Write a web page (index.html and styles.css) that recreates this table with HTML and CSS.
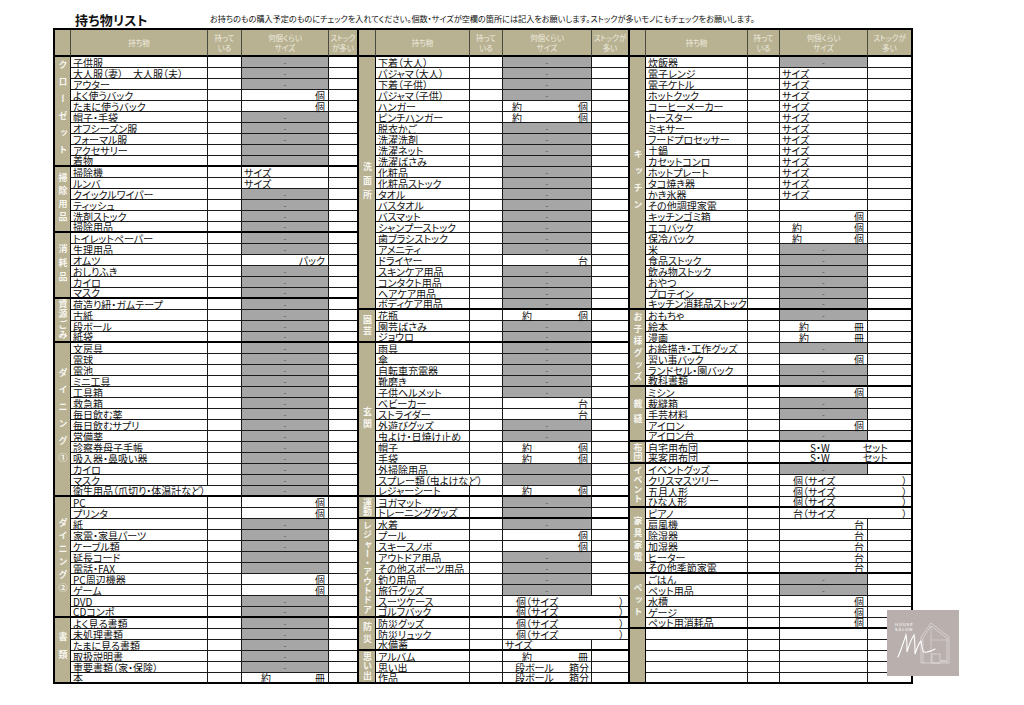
FILE: index.html
```html
<!DOCTYPE html>
<html lang="ja">
<head>
<meta charset="utf-8">
<title>持ち物リスト</title>
<link rel="stylesheet" href="styles.css">
</head>
<body>
<div class="page">
  <header class="head">
    <h1 class="title">持ち物リスト</h1>
    <p class="note">お持ちのもの購入予定のものにチェックを入れてください。個数・サイズが空欄の箇所には記入をお願いします。ストックが多いモノにもチェックをお願いします。</p>
  </header>
  <div class="sheet">
    <table class="t1">
      <colgroup><col class="c-lb1"><col class="c-it1"><col class="c-hv1"><col class="c-sz1"><col class="c-st1"></colgroup>
      <thead><tr><th></th><th>持ち物</th><th>持って<br>いる</th><th>何個くらい<br>サイズ</th><th>ストック<br>が多い</th></tr></thead>
      <tbody>
        <tr><td class="lb" rowspan="10"><span class="v s8">クローゼット</span></td><td class="it">子供服</td><td></td><td class="g">-</td><td></td></tr>
        <tr><td class="it">大人服（妻）　大人服（夫）</td><td></td><td class="g">-</td><td></td></tr>
        <tr><td class="it">アウター</td><td></td><td class="g">-</td><td></td></tr>
        <tr><td class="it">よく使うバック</td><td></td><td class="r">個</td><td></td></tr>
        <tr><td class="it">たまに使うバック</td><td></td><td class="r">個</td><td></td></tr>
        <tr><td class="it">帽子・手袋</td><td></td><td class="g">-</td><td></td></tr>
        <tr><td class="it">オフシーズン服</td><td></td><td class="g">-</td><td></td></tr>
        <tr><td class="it">フォーマル服</td><td></td><td class="g">-</td><td></td></tr>
        <tr><td class="it">アクセサリー</td><td></td><td class="g"></td><td></td></tr>
        <tr><td class="it">着物</td><td></td><td class="g"></td><td></td></tr>
      </tbody>
      <tbody>
        <tr><td class="lb" rowspan="6"><span class="v s4">掃除用品</span></td><td class="it">掃除機</td><td></td><td class="sz">サイズ</td><td></td></tr>
        <tr><td class="it">ルンバ</td><td></td><td class="sz">サイズ</td><td></td></tr>
        <tr><td class="it">クイックルワイパー</td><td></td><td class="g">-</td><td></td></tr>
        <tr><td class="it">ティッシュ</td><td></td><td class="g">-</td><td></td></tr>
        <tr><td class="it">洗剤ストック</td><td></td><td class="g">-</td><td></td></tr>
        <tr><td class="it">掃除用品</td><td></td><td class="g">-</td><td></td></tr>
      </tbody>
      <tbody>
        <tr><td class="lb" rowspan="6"><span class="v s5">消耗品</span></td><td class="it">トイレットペーパー</td><td></td><td class="g">-</td><td></td></tr>
        <tr><td class="it">生理用品</td><td></td><td class="g">-</td><td></td></tr>
        <tr><td class="it">オムツ</td><td></td><td class="r">パック</td><td></td></tr>
        <tr><td class="it">おしりふき</td><td></td><td class="g">-</td><td></td></tr>
        <tr><td class="it">カイロ</td><td></td><td class="g">-</td><td></td></tr>
        <tr><td class="it">マスク</td><td></td><td class="g">-</td><td></td></tr>
      </tbody>
      <tbody>
        <tr><td class="lb" rowspan="4"><span class="v s15">資源ごみ</span></td><td class="it">荷造り紐・ガムテープ</td><td></td><td class="g">-</td><td></td></tr>
        <tr><td class="it">古紙</td><td></td><td class="g">-</td><td></td></tr>
        <tr><td class="it">段ボール</td><td></td><td class="g">-</td><td></td></tr>
        <tr><td class="it">紙袋</td><td></td><td class="g">-</td><td></td></tr>
      </tbody>
      <tbody>
        <tr><td class="lb" rowspan="14"><span class="v s8">ダイニング①</span></td><td class="it">文房具</td><td></td><td class="g">-</td><td></td></tr>
        <tr><td class="it">電球</td><td></td><td class="g">-</td><td></td></tr>
        <tr><td class="it">電池</td><td></td><td class="g">-</td><td></td></tr>
        <tr><td class="it">ミニ工具</td><td></td><td class="g">-</td><td></td></tr>
        <tr><td class="it">工具箱</td><td></td><td class="g">-</td><td></td></tr>
        <tr><td class="it">救急箱</td><td></td><td class="g">-</td><td></td></tr>
        <tr><td class="it">毎日飲む薬</td><td></td><td class="g">-</td><td></td></tr>
        <tr><td class="it">毎日飲むサプリ</td><td></td><td class="g">-</td><td></td></tr>
        <tr><td class="it">常備薬</td><td></td><td class="g">-</td><td></td></tr>
        <tr><td class="it">診察券母子手帳</td><td></td><td class="g">-</td><td></td></tr>
        <tr><td class="it">吸入器・鼻吸い器</td><td></td><td class="g">-</td><td></td></tr>
        <tr><td class="it">カイロ</td><td></td><td class="g">-</td><td></td></tr>
        <tr><td class="it">マスク</td><td></td><td class="g">-</td><td></td></tr>
        <tr><td class="it" colspan="2">衛生用品（爪切り・体温計など）</td><td class="g">-</td><td></td></tr>
      </tbody>
      <tbody>
        <tr><td class="lb" rowspan="11"><span class="v s4">ダイニング②</span></td><td class="it">PC</td><td></td><td class="r">個</td><td></td></tr>
        <tr><td class="it">プリンタ</td><td></td><td class="r">個</td><td></td></tr>
        <tr><td class="it">紙</td><td></td><td class="g">-</td><td></td></tr>
        <tr><td class="it">家電・家具パーツ</td><td></td><td class="g">-</td><td></td></tr>
        <tr><td class="it">ケーブル類</td><td></td><td class="g">-</td><td></td></tr>
        <tr><td class="it">延長コード</td><td></td><td class="g"></td><td></td></tr>
        <tr><td class="it">電話・FAX</td><td></td><td class="g"></td><td></td></tr>
        <tr><td class="it">PC周辺機器</td><td></td><td class="r">個</td><td></td></tr>
        <tr><td class="it">ゲーム</td><td></td><td class="r">個</td><td></td></tr>
        <tr><td class="it">DVD</td><td></td><td class="g">-</td><td></td></tr>
        <tr><td class="it">CDコンポ</td><td></td><td class="g">-</td><td></td></tr>
      </tbody>
      <tbody>
        <tr><td class="lb" rowspan="6"><span class="v s9">書類</span></td><td class="it">よく見る書類</td><td></td><td class="g">-</td><td></td></tr>
        <tr><td class="it">未処理書類</td><td></td><td class="g">-</td><td></td></tr>
        <tr><td class="it">たまに見る書類</td><td></td><td class="g">-</td><td></td></tr>
        <tr><td class="it">取扱説明書</td><td></td><td class="g">-</td><td></td></tr>
        <tr><td class="it">重要書類（家・保険）</td><td></td><td class="g">-</td><td></td></tr>
        <tr><td class="it">本</td><td></td><td class="yk"><span class="l">約</span>冊</td><td></td></tr>
      </tbody>
    </table>

    <table class="t2">
      <colgroup><col class="c-lb2"><col class="c-it2"><col class="c-hv2"><col class="c-sz2"><col class="c-st2"></colgroup>
      <thead><tr><th></th><th>持ち物</th><th>持って<br>いる</th><th>何個くらい<br>サイズ</th><th>ストックが<br>多い</th></tr></thead>
      <tbody>
        <tr><td class="lb" rowspan="23"><span class="v s5">洗面所</span></td><td class="it">下着（大人）</td><td></td><td class="g">-</td><td></td></tr>
        <tr><td class="it">パジャマ（大人）</td><td></td><td class="g">-</td><td></td></tr>
        <tr><td class="it">下着（子供）</td><td></td><td class="g">-</td><td></td></tr>
        <tr><td class="it">パジャマ（子供）</td><td></td><td class="g">-</td><td></td></tr>
        <tr><td class="it">ハンガー</td><td></td><td class="yk n"><span class="l">約</span>個</td><td></td></tr>
        <tr><td class="it">ピンチハンガー</td><td></td><td class="yk n"><span class="l">約</span>個</td><td></td></tr>
        <tr><td class="it">脱衣かご</td><td></td><td class="g">-</td><td></td></tr>
        <tr><td class="it">洗濯洗剤</td><td></td><td class="g">-</td><td></td></tr>
        <tr><td class="it">洗濯ネット</td><td></td><td class="g">-</td><td></td></tr>
        <tr><td class="it">洗濯ばさみ</td><td></td><td class="g"></td><td></td></tr>
        <tr><td class="it">化粧品</td><td></td><td class="g">-</td><td></td></tr>
        <tr><td class="it">化粧品ストック</td><td></td><td class="g">-</td><td></td></tr>
        <tr><td class="it">タオル</td><td></td><td class="g">-</td><td></td></tr>
        <tr><td class="it">バスタオル</td><td></td><td class="g">-</td><td></td></tr>
        <tr><td class="it">バスマット</td><td></td><td class="g">-</td><td></td></tr>
        <tr><td class="it">シャンプーストック</td><td></td><td class="g">-</td><td></td></tr>
        <tr><td class="it">歯ブラシストック</td><td></td><td class="g">-</td><td></td></tr>
        <tr><td class="it">アメニティ</td><td></td><td class="g">-</td><td></td></tr>
        <tr><td class="it">ドライヤー</td><td></td><td class="r">台</td><td></td></tr>
        <tr><td class="it">スキンケア用品</td><td></td><td class="g">-</td><td></td></tr>
        <tr><td class="it">コンタクト用品</td><td></td><td class="g">-</td><td></td></tr>
        <tr><td class="it">ヘアケア用品</td><td></td><td class="g">-</td><td></td></tr>
        <tr><td class="it">ボディケア用品</td><td></td><td class="g">-</td><td></td></tr>
      </tbody>
      <tbody>
        <tr><td class="lb" rowspan="3"><span class="v s2">園芸</span></td><td class="it">花瓶</td><td></td><td class="yk"><span class="l">約</span>個</td><td></td></tr>
        <tr><td class="it">園芸ばさみ</td><td></td><td class="g">-</td><td></td></tr>
        <tr><td class="it">ジョウロ</td><td></td><td class="g">-</td><td></td></tr>
      </tbody>
      <tbody>
        <tr><td class="lb" rowspan="14"><span class="v s3">玄関</span></td><td class="it">雨具</td><td></td><td class="g">-</td><td></td></tr>
        <tr><td class="it">傘</td><td></td><td class="g">-</td><td></td></tr>
        <tr><td class="it">自転車充電器</td><td></td><td class="g">-</td><td></td></tr>
        <tr><td class="it">靴磨き</td><td></td><td class="g">-</td><td></td></tr>
        <tr><td class="it">子供ヘルメット</td><td></td><td class="g">-</td><td></td></tr>
        <tr><td class="it">ベビーカー</td><td></td><td class="r">台</td><td></td></tr>
        <tr><td class="it">ストライダー</td><td></td><td class="r">台</td><td></td></tr>
        <tr><td class="it">外遊びグッズ</td><td></td><td class="g">-</td><td></td></tr>
        <tr><td class="it">虫よけ・日焼け止め</td><td></td><td class="g">-</td><td></td></tr>
        <tr><td class="it">帽子</td><td></td><td class="yk"><span class="l">約</span>個</td><td></td></tr>
        <tr><td class="it">手袋</td><td></td><td class="yk"><span class="l">約</span>個</td><td></td></tr>
        <tr><td class="it">外掃除用品</td><td></td><td class="g"></td><td></td></tr>
        <tr><td class="it" colspan="2">スプレー類（虫よけなど）</td><td class="g"></td><td></td></tr>
        <tr><td class="it">レジャーシート</td><td></td><td class="yk"><span class="l">約</span>個</td><td></td></tr>
      </tbody>
      <tbody>
        <tr><td class="lb" rowspan="2"><span class="v s05">運動</span></td><td class="it">ヨガマット</td><td></td><td class="g">-</td><td></td></tr>
        <tr><td class="it">トレーニンググッズ</td><td></td><td class="g"></td><td></td></tr>
      </tbody>
      <tbody>
        <tr><td class="lb" rowspan="9"><span class="v s0">レジャー・アウトドア</span></td><td class="it">水着</td><td></td><td class="g">-</td><td></td></tr>
        <tr><td class="it">プール</td><td></td><td class="r">個</td><td></td></tr>
        <tr><td class="it">スキースノボ</td><td></td><td class="r">個</td><td></td></tr>
        <tr><td class="it">アウトドア用品</td><td></td><td class="g">-</td><td></td></tr>
        <tr><td class="it">その他スポーツ用品</td><td></td><td class="g">-</td><td></td></tr>
        <tr><td class="it">釣り用品</td><td></td><td class="g">-</td><td></td></tr>
        <tr><td class="it">旅行グッズ</td><td></td><td class="g">-</td><td></td></tr>
        <tr><td class="it">スーツケース</td><td></td><td class="ps" colspan="2"><span class="l">個（サイズ</span>）</td></tr>
        <tr><td class="it">ゴルフバック</td><td></td><td class="ps" colspan="2"><span class="l">個（サイズ</span>）</td></tr>
      </tbody>
      <tbody>
        <tr><td class="lb" rowspan="3"><span class="v s3">防災</span></td><td class="it">防災グッズ</td><td></td><td class="ps" colspan="2"><span class="l">個（サイズ</span>）</td></tr>
        <tr><td class="it">防災リュック</td><td></td><td class="ps" colspan="2"><span class="l">個（サイズ</span>）</td></tr>
        <tr><td class="it">水備蓄</td><td></td><td class="sz">サイズ</td><td></td></tr>
      </tbody>
      <tbody>
        <tr><td class="lb" rowspan="3"><span class="v s05">思い出</span></td><td class="it">アルバム</td><td></td><td class="yk"><span class="l">約</span>冊</td><td></td></tr>
        <tr><td class="it">思い出</td><td></td><td class="yk d"><span class="l">段ボール</span>箱分</td><td></td></tr>
        <tr><td class="it">作品</td><td></td><td class="yk d"><span class="l">段ボール</span>箱分</td><td></td></tr>
      </tbody>
    </table>

    <table class="t3">
      <colgroup><col class="c-lb3"><col class="c-it3"><col class="c-hv3"><col class="c-sz3"><col class="c-st3"></colgroup>
      <thead><tr><th></th><th>持ち物</th><th>持って<br>いる</th><th>何個くらい<br>サイズ</th><th>ストックが<br>多い</th></tr></thead>
      <tbody>
        <tr><td class="lb" rowspan="23"><span class="v s8">キッチン</span></td><td class="it">炊飯器</td><td></td><td class="g">-</td><td></td></tr>
        <tr><td class="it">電子レンジ</td><td></td><td class="sz">サイズ</td><td></td></tr>
        <tr><td class="it">電子ケトル</td><td></td><td class="sz">サイズ</td><td></td></tr>
        <tr><td class="it">ホットクック</td><td></td><td class="sz">サイズ</td><td></td></tr>
        <tr><td class="it">コーヒーメーカー</td><td></td><td class="sz">サイズ</td><td></td></tr>
        <tr><td class="it">トースター</td><td></td><td class="sz">サイズ</td><td></td></tr>
        <tr><td class="it">ミキサー</td><td></td><td class="sz">サイズ</td><td></td></tr>
        <tr><td class="it">フードプロセッサー</td><td></td><td class="sz">サイズ</td><td></td></tr>
        <tr><td class="it">土鍋</td><td></td><td class="sz">サイズ</td><td></td></tr>
        <tr><td class="it">カセットコンロ</td><td></td><td class="sz">サイズ</td><td></td></tr>
        <tr><td class="it">ホットプレート</td><td></td><td class="sz">サイズ</td><td></td></tr>
        <tr><td class="it">タコ焼き器</td><td></td><td class="sz">サイズ</td><td></td></tr>
        <tr><td class="it">かき氷器</td><td></td><td class="sz">サイズ</td><td></td></tr>
        <tr><td class="it">その他調理家電</td><td></td><td></td><td></td></tr>
        <tr><td class="it">キッチンゴミ箱</td><td></td><td class="r">個</td><td></td></tr>
        <tr><td class="it">エコバック</td><td></td><td class="yk m"><span class="l">約</span>個</td><td></td></tr>
        <tr><td class="it">保冷バック</td><td></td><td class="yk m"><span class="l">約</span>個</td><td></td></tr>
        <tr><td class="it">米</td><td></td><td class="g">-</td><td></td></tr>
        <tr><td class="it">食品ストック</td><td></td><td class="g">-</td><td></td></tr>
        <tr><td class="it">飲み物ストック</td><td></td><td class="g">-</td><td></td></tr>
        <tr><td class="it">おやつ</td><td></td><td class="g">-</td><td></td></tr>
        <tr><td class="it">プロテイン</td><td></td><td class="g">-</td><td></td></tr>
        <tr><td class="it">キッチン消耗品ストック</td><td></td><td class="g">-</td><td></td></tr>
      </tbody>
      <tbody>
        <tr><td class="lb" rowspan="7"><span class="v s3">お子様グッズ</span></td><td class="it">おもちゃ</td><td></td><td class="g">-</td><td></td></tr>
        <tr><td class="it">絵本</td><td></td><td class="yk"><span class="l">約</span>冊</td><td></td></tr>
        <tr><td class="it">漫画</td><td></td><td class="yk"><span class="l">約</span>冊</td><td></td></tr>
        <tr><td class="it">お絵描き・工作グッズ</td><td></td><td class="g">-</td><td></td></tr>
        <tr><td class="it">習い事バック</td><td></td><td class="r">個</td><td></td></tr>
        <tr><td class="it">ランドセル・園バック</td><td></td><td class="g">-</td><td></td></tr>
        <tr><td class="it">教科書類</td><td></td><td class="g">-</td><td></td></tr>
      </tbody>
      <tbody>
        <tr><td class="lb" rowspan="5"><span class="v s6">裁縫</span></td><td class="it">ミシン</td><td></td><td class="r">個</td><td></td></tr>
        <tr><td class="it">裁縫箱</td><td></td><td class="g">-</td><td></td></tr>
        <tr><td class="it">手芸材料</td><td></td><td class="g">-</td><td></td></tr>
        <tr><td class="it">アイロン</td><td></td><td class="r">個</td><td></td></tr>
        <tr><td class="it">アイロン台</td><td></td><td class="g">-</td><td></td></tr>
      </tbody>
      <tbody>
        <tr><td class="lb" rowspan="2"><span class="v s05">布団</span></td><td class="it">自宅用布団</td><td></td><td class="sw" colspan="2">S・W<span class="set">セット</span></td></tr>
        <tr><td class="it">来客用布団</td><td></td><td class="sw" colspan="2">S・W<span class="set">セット</span></td></tr>
      </tbody>
      <tbody>
        <tr><td class="lb" rowspan="4"><span class="v s05">イベント</span></td><td class="it">イベントグッズ</td><td></td><td class="g">-</td><td></td></tr>
        <tr><td class="it">クリスマスツリー</td><td></td><td class="ps" colspan="2"><span class="l">個（サイズ</span>）</td></tr>
        <tr><td class="it">五月人形</td><td></td><td class="ps" colspan="2"><span class="l">個（サイズ</span>）</td></tr>
        <tr><td class="it">ひな人形</td><td></td><td class="ps" colspan="2"><span class="l">個（サイズ</span>）</td></tr>
      </tbody>
      <tbody>
        <tr><td class="lb" rowspan="6"><span class="v s3">家具家電</span></td><td class="it">ピアノ</td><td></td><td class="ps" colspan="2"><span class="l">台（サイズ</span>）</td></tr>
        <tr><td class="it">扇風機</td><td></td><td class="r">台</td><td></td></tr>
        <tr><td class="it">除湿器</td><td></td><td class="r">台</td><td></td></tr>
        <tr><td class="it">加湿器</td><td></td><td class="r">台</td><td></td></tr>
        <tr><td class="it">ヒーター</td><td></td><td class="r">台</td><td></td></tr>
        <tr><td class="it">その他季節家電</td><td></td><td class="r">台</td><td></td></tr>
      </tbody>
      <tbody>
        <tr><td class="lb" rowspan="5"><span class="v s3">ペット</span></td><td class="it">ごはん</td><td></td><td class="g">-</td><td></td></tr>
        <tr><td class="it">ペット用品</td><td></td><td class="g">-</td><td></td></tr>
        <tr><td class="it">水槽</td><td></td><td class="r">個</td><td></td></tr>
        <tr><td class="it">ゲージ</td><td></td><td class="r">個</td><td></td></tr>
        <tr><td class="it">ペット用消耗品</td><td></td><td class="r">個</td><td></td></tr>
      </tbody>
      <tbody>
        <tr><td class="lb" rowspan="5"></td><td class="it"></td><td></td><td></td><td></td></tr>
        <tr><td class="it"></td><td></td><td></td><td></td></tr>
        <tr><td class="it"></td><td></td><td></td><td></td></tr>
        <tr><td class="it"></td><td></td><td></td><td></td></tr>
        <tr><td class="it"></td><td></td><td></td><td></td></tr>
      </tbody>
    </table>
  </div>

  <div class="logo" aria-label="HOUSE SALON">
    <svg width="72" height="66" viewBox="0 0 72 66">
      <rect width="72" height="66" fill="#b9b0ae"/>
      <text x="8" y="16" class="lg-t">HOUSE</text>
      <text x="8" y="21" class="lg-t">SALON</text>
      <path d="M11 47 C14 40 17 31 19 25 C20 30 20 37 20 42 C22 35 25 28 27 25 C28 31 28 38 28 44 C30 38 32 33 34 31 C35 36 35 41 37 42 C40 43 44 41 48 39" fill="none" stroke="#fff" stroke-width="1.1" stroke-linecap="round"/>
      <path d="M34 53 V27 L44 13 L62 27 V53 Z" fill="none" stroke="#f2eeee" stroke-width="0.5"/>
      <path d="M36 53 V28 L44 16 L60 28 V53" fill="none" stroke="#f2eeee" stroke-width="0.5"/>
      <path d="M44 16 V53 M44 30 L60 30" fill="none" stroke="#f2eeee" stroke-width="0.4"/>
      <rect x="45" y="44" width="8" height="9" fill="none" stroke="#f2eeee" stroke-width="0.5"/>
      <text x="54" y="52" class="lg-s">Mini</text>
    </svg>
  </div>
</div>
</body>
</html>
```

FILE: styles.css
```css
* { box-sizing: border-box; }

body {
  margin: 0;
  background: #ffffff;
  color: #111111;
  font-family: "Noto Sans CJK JP", "Noto Sans", sans-serif;
  font-feature-settings: "palt";
}

.page {
  position: relative;
  width: 1024px;
  height: 705px;
  padding-top: 11px;
}

.head {
  display: flex;
  align-items: center;
  height: 17px;
}

.title {
  margin: 0 0 0 75px;
  width: 135px;
  font-size: 13px;
  font-weight: bold;
  line-height: 17px;
  letter-spacing: 0.2px;
}

.note {
  margin: -2px 0 0 0;
  font-size: 8.15px;
  line-height: 10px;
}

.sheet {
  display: flex;
  align-items: flex-start;
  margin-left: 53px;
}

table {
  border-collapse: separate;
  border-spacing: 0;
  table-layout: fixed;
  border-top: 2px solid #000;
  border-left: 2px solid #000;
}

.t1 { width: 304px; }
.t2 { width: 271px; }
.t3 { width: 285px; border-right: 2px solid #000; }

.c-lb1 { width: 16px; } .c-it1 { width: 137px; } .c-hv1 { width: 34px; } .c-sz1 { width: 87px; } .c-st1 { width: 28px; }
.c-lb2 { width: 17px; } .c-it2 { width: 94px; } .c-hv2 { width: 33px; } .c-sz2 { width: 89px; } .c-st2 { width: 36px; }
.c-lb3 { width: 16px; } .c-it3 { width: 102px; } .c-hv3 { width: 32px; } .c-sz3 { width: 88px; } .c-st3 { width: 43px; }

th {
  height: 27px;
  padding: 0;
  background: #b8b293;
  color: #efebde;
  font-size: 7.5px;
  font-weight: normal;
  line-height: 10px;
  text-align: center;
  border-right: 1px solid #4a4a40;
  border-bottom: 2px solid #000;
}
th:last-child { border-right: 0; }

tbody tr { height: 11px; }

td {
  height: 11px;
  padding: 0 1px;
  font-size: 10px;
  line-height: 9px;
  white-space: nowrap;
  border-right: 1px solid #1a1a1a;
  border-bottom: 1px solid #1a1a1a;
  background: #fff;
}
td:last-child { border-right: 0; }
tbody tr:last-child td { border-bottom-width: 2px; border-bottom-color: #000; }

.lb {
  background: #b8b293;
  border-right: 1px solid #000;
  border-bottom: 2px solid #000;
  text-align: center;
  vertical-align: middle;
  padding: 0;
  line-height: 0;
  overflow: hidden;
}

.v {
  display: inline-block;
  vertical-align: middle;
  writing-mode: vertical-rl;
  text-orientation: upright;
  font-size: 9px;
  line-height: 14px;
  font-weight: bold;
  color: #f7f5ee;
  font-feature-settings: normal;
}
.s0 { letter-spacing: 0.3px; }
.s05 { letter-spacing: 0.5px; }
.s15 { letter-spacing: 1.5px; }
.s2 { letter-spacing: 2px; }
.s3 { letter-spacing: 3px; }
.s4 { letter-spacing: 4px; }
.s5 { letter-spacing: 5px; }
.s6 { letter-spacing: 6px; }
.s8 { letter-spacing: 8px; }
.s9 { letter-spacing: 9px; }

.it { text-align: left; padding-left: 2px; }

.g {
  background: #a6a6a6;
  text-align: center;
  font-size: 8px;
  color: #4a4a4a;
}

.sz { text-align: left; padding-left: 2px; }

.r { text-align: right; padding-right: 3px; }

.yk { text-align: right; padding-left: 19px; padding-right: 3px; }
.yk.n { padding-left: 9px; }
.yk.m { padding-left: 12px; }
.yk.d { padding-left: 12px; padding-right: 2px; }
.l { float: left; }

.ps { text-align: right; padding-left: 13px; padding-right: 4px; }

.sw { padding-left: 30px; text-align: left; }
.set { margin-left: 33px; }

.logo {
  position: absolute;
  left: 887px;
  top: 610px;
  width: 72px;
  height: 66px;
}
.logo svg { display: block; }
.lg-t {
  font-family: "DejaVu Sans", sans-serif;
  font-size: 4px;
  letter-spacing: 0.9px;
  fill: #ffffff;
}
.lg-s {
  font-family: "DejaVu Sans", sans-serif;
  font-size: 2.6px;
  fill: #ffffff;
}
```
